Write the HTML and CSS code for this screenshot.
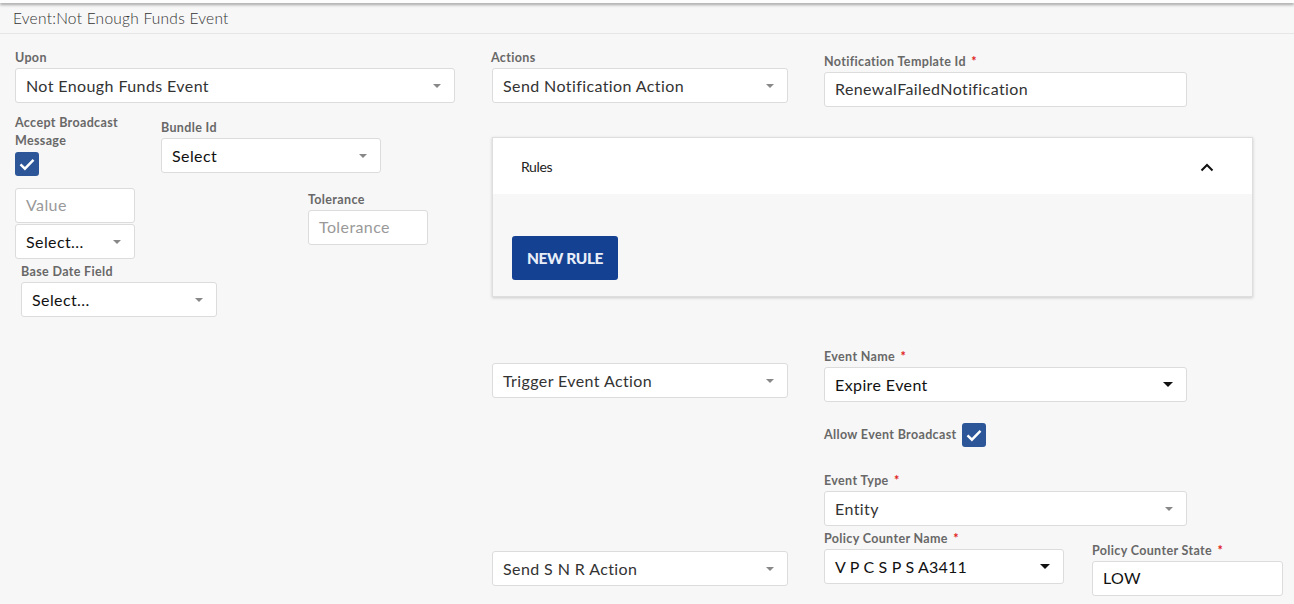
FILE: index.html
```html
<!DOCTYPE html>
<html>
<head>
<meta charset="utf-8">
<link rel="stylesheet" href="styles.css">
</head>
<body>
<div class="topbar"></div>
<div class="header">Event:Not Enough Funds Event</div>
<div class="content">
  <div class="left">
    <div class="field">
      <label class="lbl">Upon</label>
      <div class="ctl sel w440"><span>Not Enough Funds Event</span><i class="caret"></i></div>
    </div>
    <div class="row r2">
      <div class="accept">
        <label class="lbl two">Accept Broadcast Message</label>
        <span class="check"><svg width="24" height="24" viewBox="0 0 24 24"><path d="M5.5 12.3l4.4 4.4 8.6-8.9" fill="none" stroke="#fff" stroke-width="2.4"/></svg></span>
      </div>
      <div class="field bundle">
        <label class="lbl">Bundle Id</label>
        <div class="ctl sel w220 dark"><span>Select</span><i class="caret"></i></div>
      </div>
    </div>
    <div class="row r3">
      <div class="stack">
        <div class="ctl w120 ph">Value</div>
        <div class="ctl sel w120 dark"><span>Select...</span><i class="caret"></i></div>
      </div>
      <div class="field tol">
        <label class="lbl">Tolerance</label>
        <div class="ctl w120 ph">Tolerance</div>
      </div>
    </div>
    <div class="field base">
      <label class="lbl">Base Date Field</label>
      <div class="ctl sel w196 dark"><span>Select...</span><i class="caret"></i></div>
    </div>
  </div>

  <div class="right">
    <div class="row">
      <div class="field first">
        <label class="lbl">Actions</label>
        <div class="ctl sel w296"><span>Send Notification Action</span><i class="caret"></i></div>
      </div>
      <div class="field params notif">
        <label class="lbl">Notification Template Id <b class="req">*</b></label>
        <div class="ctl w363">RenewalFailedNotification</div>
      </div>
    </div>

    <div class="panel">
      <div class="panel-head">
        <span class="panel-title">Rules</span>
        <svg class="chev" width="14" height="9" viewBox="0 0 14 9"><path d="M1.5 7.5L7 2l5.5 5.5" fill="none" stroke="#111" stroke-width="2"/></svg>
      </div>
      <div class="panel-body">
        <button class="btn">NEW RULE</button>
      </div>
    </div>

    <div class="row action trig">
      <div class="ctl sel w296 act"><span>Trigger Event Action</span><i class="caret"></i></div>
      <div class="params">
        <div class="field">
          <label class="lbl">Event Name <b class="req">*</b></label>
          <div class="ctl sel w363 dark"><span>Expire Event</span><i class="caret big"></i></div>
        </div>
        <div class="allow">
          <label class="lbl">Allow Event Broadcast</label>
          <span class="check"><svg width="24" height="24" viewBox="0 0 24 24"><path d="M5.5 12.3l4.4 4.4 8.6-8.9" fill="none" stroke="#fff" stroke-width="2.4"/></svg></span>
        </div>
        <div class="field etype">
          <label class="lbl">Event Type <b class="req">*</b></label>
          <div class="ctl sel w363"><span>Entity</span><i class="caret"></i></div>
        </div>
      </div>
    </div>

    <div class="row action snr">
      <div class="ctl sel w296 act"><span>Send S N R Action</span><i class="caret"></i></div>
      <div class="params prow">
        <div class="field">
          <label class="lbl">Policy Counter Name <b class="req">*</b></label>
          <div class="ctl sel w240 dark"><span class="spaced">V P C S P S A3411</span><i class="caret big"></i></div>
        </div>
        <div class="field pstate">
          <label class="lbl">Policy Counter State <b class="req">*</b></label>
          <div class="ctl w191 dark">LOW</div>
        </div>
      </div>
    </div>
  </div>
</div>
</body>
</html>
```

FILE: styles.css
```css
* { box-sizing: border-box; }
html, body { margin: 0; padding: 0; }
body {
  background: #f7f7f7;
  font-family: Lato, "Open Sans", sans-serif;
  color: #333;
  width: 1294px;
  height: 604px;
  overflow: hidden;
}
.topbar {
  height: 3px;
  background: #fdfdfd;
  box-shadow: 0 2px 3px rgba(0,0,0,0.35);
  position: relative;
  z-index: 1;
}
.header {
  height: 31px;
  line-height: 30px;
  padding-left: 13px;
  font-size: 15.5px;
  font-weight: 300;
  letter-spacing: 0.25px;
  color: #333;
  border-bottom: 1px solid #e6e6e6;
}
.content {
  display: flex;
  padding-left: 15px;
}
.left {
  width: 440px;
  padding-top: 15px;
}
.right {
  margin-left: 37px;
  padding-top: 15px;
}
.row { display: flex; align-items: flex-start; }
.field { display: flex; flex-direction: column; }
.lbl {
  display: block;
  font-size: 12.5px;
  font-weight: 700;
  line-height: 16px;
  letter-spacing: 0.35px;
  color: #686868;
  padding-top: 1px;
  margin-bottom: 2px;
  white-space: nowrap;
}
.first > .lbl { margin-left: -1px; }
.lbl.two {
  white-space: normal;
  width: 125px;
  line-height: 18px;
  padding-top: 0;
  margin-bottom: 2px;
}
.req { color: #e02020; font-weight: 700; margin-left: 2px; }
.ctl {
  height: 35px;
  background: #fff;
  border: 1px solid #dcdcdc;
  border-radius: 3px;
  padding: 0 10px;
  font-size: 16px;
  line-height: 31px;
  letter-spacing: 0.4px;
  color: #333;
  white-space: nowrap;
}
.ctl.dark { color: #111; }
.ctl.ph { color: #999; }
.sel { display: flex; align-items: center; justify-content: space-between; padding-right: 13px; }
.caret {
  width: 0; height: 0;
  border-left: 4.5px solid transparent;
  border-right: 4.5px solid transparent;
  border-top: 4.5px solid #888;
}
.caret.big {
  border-left-width: 5.5px;
  border-right-width: 5.5px;
  border-top: 5.5px solid #111;
}
.spaced { letter-spacing: 0.2px; }
.w440 { width: 440px; }
.w220 { width: 220px; }
.w120 { width: 120px; }
.w196 { width: 196px; }
.w296 { width: 296px; }
.w363 { width: 363px; }
.w240 { width: 240px; }
.w191 { width: 191px; }

.check {
  display: block;
  width: 24px;
  height: 24px;
  background: #2c5698;
  border-radius: 3px;
}
.check svg { display: block; }

.r2 { margin-top: 11px; }
.accept { width: 146px; }
.bundle { margin-top: 5px; }
.r3 { margin-top: 12px; }
.stack { display: flex; flex-direction: column; }
.stack .ctl + .ctl { margin-top: 1px; }
.tol { margin-left: 173px; margin-top: 3px; }
.base { margin-left: 6px; margin-top: 4px; }

.notif { margin-left: 36px; margin-top: 4px; }

.panel {
  width: 761px;
  margin-top: 30px;
  border: 1px solid #dedede;
  box-shadow: 0 1px 3px rgba(0,0,0,0.18);
  background: #f7f7f7;
}
.panel-head {
  height: 56px;
  background: #fff;
  display: flex;
  align-items: center;
  justify-content: space-between;
  padding: 0 38px 0 28px;
}
.panel-title {
  font-size: 14px;
  color: #222;
  letter-spacing: -0.4px;
}
.chev { display: block; margin-top: 2px; }
.panel-body {
  height: 102px;
  padding: 42px 0 0 19px;
}
.btn {
  display: block;
  height: 44px;
  width: 106px;
  border: 0;
  border-radius: 3px;
  background: #144192;
  color: #e8eef8;
  font-family: Lato, sans-serif;
  font-weight: 900;
  font-size: 15.5px;
  letter-spacing: -0.4px;
  padding: 0;
}

.action .params { margin-left: 36px; }
.trig { margin-top: 51px; }
.trig .act { margin-top: 15px; }
.allow { display: flex; align-items: center; margin-top: 21px; }
.allow .lbl { margin: 0 4px 0 0; padding-top: 0; width: 134px; }
.etype { margin-top: 25px; }
.snr { margin-top: 4px; }
.snr .act { margin-top: 21px; }
.prow { display: flex; align-items: flex-start; }
.pstate { margin-left: 28px; margin-top: 12px; }
```
